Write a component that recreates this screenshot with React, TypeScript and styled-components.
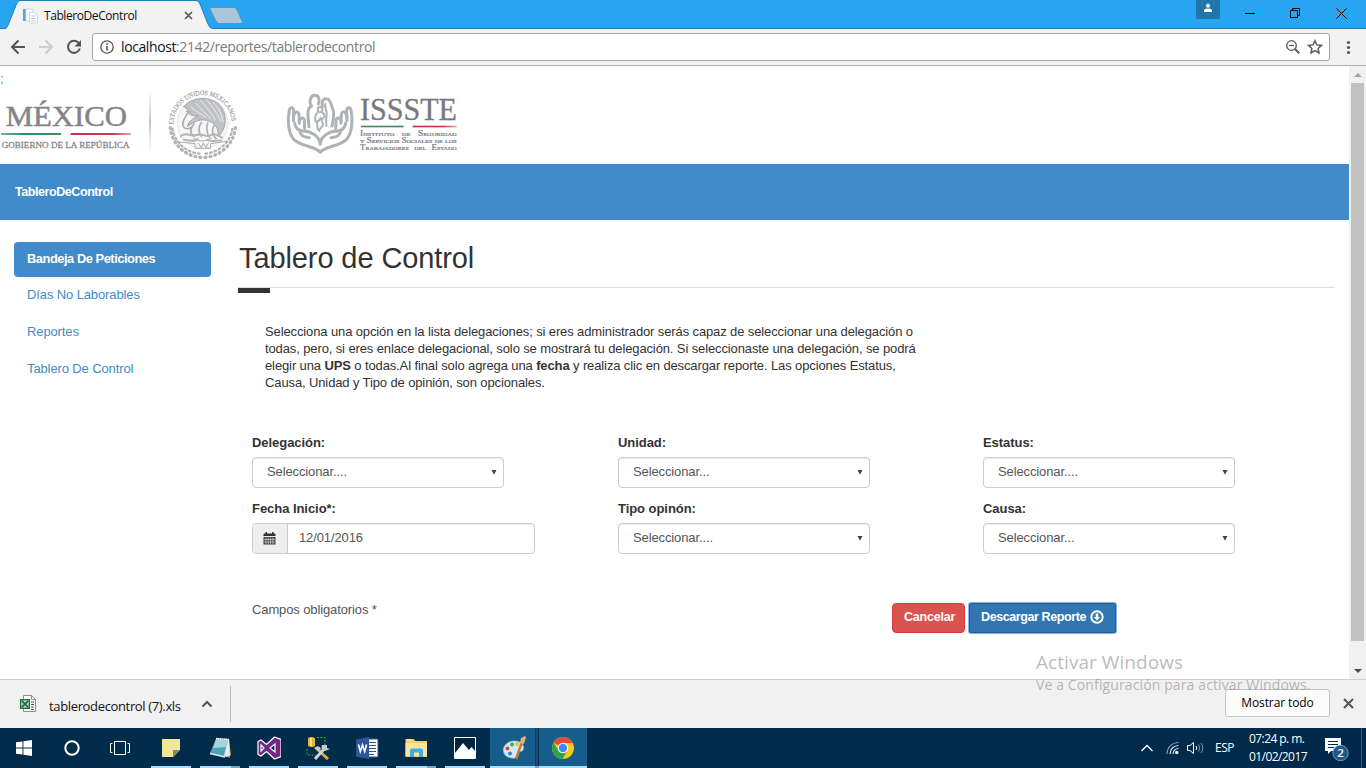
import React from 'react';
import styled, { createGlobalStyle, css } from 'styled-components';

const ui = `'Open Sans', 'Noto Sans', sans-serif`;
const arial = `'Liberation Sans', Arial, sans-serif`;

const GlobalStyle = createGlobalStyle`
  * { box-sizing: border-box; }
  body { margin: 0; background: #fff; overflow: hidden; }
  svg { display: block; flex: none; }
  button { font: inherit; cursor: pointer; }
`;

const Screen = styled.div`
  position: relative;
  width: 1366px;
  height: 768px;
  display: flex;
  flex-direction: column;
  overflow: hidden;
  background: #fff;
`;

/* ---------- browser chrome ---------- */

const TitleBar = styled.header`
  display: flex;
  height: 29px;
  flex: none;
  background: #28a5f1;
  box-shadow: inset 0 -1px 0 #1f7fb9;
`;

const Tab = styled.div`
  position: relative;
  display: flex;
  align-items: center;
  width: 208px;
  height: 29px;
  padding: 2px 15px 0 22px;
`;

const TabShape = styled.svg`
  position: absolute;
  left: 0;
  top: 0;
`;

const TabTitle = styled.span`
  position: relative;
  margin-left: 6px;
  flex: 1;
  font: 12px/16px ${ui};
  letter-spacing: -0.42px;
  color: #111;
  white-space: nowrap;
`;

const Layered = styled.span`
  position: relative;
  display: flex;
`;

const WindowControls = styled.div`
  display: flex;
  margin-left: auto;
  padding-right: 2px;
`;

const Profile = styled.div`
  display: flex;
  justify-content: center;
  width: 24px;
  height: 19px;
  padding-top: 3px;
  margin-right: 6px;
  background: #2176a9;
`;

const WindowButton = styled.div`
  display: flex;
  align-items: center;
  justify-content: center;
  width: 46px;
  height: 26px;
`;

const Toolbar = styled.div`
  display: flex;
  align-items: center;
  height: 37px;
  flex: none;
  padding: 0 11px 0 10px;
  background: #f2f2f2;
  border-bottom: 1px solid #b0b0b0;
`;

const NavIcons = styled.div`
  display: flex;
  gap: 12px;
  width: 82px;
`;

const Omnibox = styled.div`
  display: flex;
  align-items: center;
  width: 1238px;
  height: 28px;
  padding: 0 6px 0 7px;
  background: #fff;
  border: 1px solid #a6a6a6;
  border-radius: 3px;
`;

const OmniboxActions = styled.div`
  display: flex;
  align-items: center;
  gap: 7px;
`;

const Url = styled.span`
  flex: 1;
  margin-left: 7px;
  font: 14px/20px ${ui};
  letter-spacing: -0.4px;
  color: #7b7b7b;
  b { font-weight: 400; color: #111; }
`;

const MenuDots = styled.div`
  margin-left: auto;
`;

/* ---------- page ---------- */

const Viewport = styled.div`
  display: flex;
  height: 613px;
  flex: none;
`;

const Page = styled.div`
  width: 1349px;
  font: 13px/17px ${arial};
  letter-spacing: -0.118px;
  color: #333;
`;

const StrayLine = styled.div`
  height: 22px;
  padding-top: 4px;
  color: #428bca;
`;

const Logos = styled.div`
  display: flex;
  height: 76px;
  letter-spacing: 0;
`;

const NavBar = styled.nav`
  display: flex;
  align-items: center;
  height: 56px;
  padding-left: 15px;
  background: #428bca;
  color: #fff;
  font-weight: 700;
  font-size: 12.5px;
  letter-spacing: -0.43px;
`;

const Columns = styled.div`
  display: flex;
  padding: 22px 14px 0;
`;

const SideMenu = styled.ul`
  width: 197px;
  margin: 0 27px 0 0;
  padding: 0;
  list-style: none;
`;

const SideItem = styled.li<{ $active?: boolean }>`
  height: 35px;
  margin-bottom: 2px;
  padding: 8px 13px;
  border-radius: 4px;
  color: #428bca;
  ${(p) => p.$active && css`
    background: #428bca;
    color: #fff;
    font-weight: 700;
    font-size: 12.8px;
    letter-spacing: -0.43px;
    margin-bottom: 1px;
  `}
`;

const Main = styled.main`
  width: 1097px;
`;

const Heading = styled.h1`
  height: 46px;
  margin: 0;
  padding-left: 1px;
  border-bottom: 1px solid #ddd;
  font: 400 29px/33px ${arial};
  letter-spacing: -0.1px;
`;

const Accent = styled.div`
  width: 32px;
  height: 5px;
  background: #333;
`;

const Intro = styled.p`
  width: 672px;
  margin: 30px 0 43px 27px;
  white-space: nowrap;
`;

const Form = styled.div`
  display: grid;
  grid-template-columns: 366px 365px 252px;
  row-gap: 3px;
  padding-left: 14px;
`;

const Field = styled.label`
  display: block;
  height: 63px;
`;

const Label = styled.span`
  display: block;
  height: 23px;
  font-weight: 700;
  letter-spacing: -0.05px;
`;

const Control = styled.div`
  display: flex;
  align-items: center;
  justify-content: space-between;
  width: 252px;
  height: 31px;
  padding: 0 6px 2px 14px;
  border: 1px solid #ccc;
  border-radius: 4px;
  color: #555;
  box-shadow: inset 0 1px 1px rgba(0, 0, 0, 0.075);
`;

const DateGroup = styled.div`
  display: flex;
  width: 283px;
  height: 31px;
  border: 1px solid #ccc;
  border-radius: 4px;
  overflow: hidden;
  color: #555;
`;

const DateAddon = styled.span`
  display: flex;
  align-items: center;
  justify-content: center;
  width: 35px;
  padding-right: 1px;
  background: #eee;
  border-right: 1px solid #ccc;
`;

const DateValue = styled.span`
  flex: 1;
  padding: 5px 11px;
  box-shadow: inset 0 1px 1px rgba(0, 0, 0, 0.075);
`;

const Actions = styled.div`
  display: flex;
  align-items: flex-start;
  padding: 38px 0 0 14px;
`;

const Required = styled.span`
  width: 640px;
  color: #555;
`;

const Button = styled.button<{ $kind: 'danger' | 'primary' }>`
  display: flex;
  align-items: center;
  justify-content: space-between;
  height: 30px;
  margin-top: 2px;
  padding: 0 11px 2px;
  border-radius: 4px;
  color: #fff;
  font: 700 12.5px/17px ${arial};
  white-space: nowrap;
  ${(p) => p.$kind === 'danger' ? css`
    width: 73px;
    background: #d9534f;
    border: 1px solid #d43f3a;
    margin-right: 4px;
    letter-spacing: -0.2px;
  ` : css`
    width: 147px;
    background: #3276b1;
    border: 1px solid #285e8e;
    border-radius: 2px;
    box-shadow: 0 0 0 1px #85b1f4;
    letter-spacing: -0.4px;
  `}
`;

const ScrollBar = styled.div`
  display: flex;
  flex-direction: column;
  align-items: center;
  width: 17px;
  background: #f1f1f1;
`;

const ScrollArrow = styled.div`
  display: flex;
  align-items: center;
  justify-content: center;
  width: 17px;
  height: 17px;
`;

const Thumb = styled.div`
  width: 13px;
  height: 558px;
  margin-bottom: auto;
  background: #c1c1c1;
`;

/* ---------- download shelf ---------- */

const Shelf = styled.div`
  display: flex;
  align-items: center;
  height: 49px;
  flex: none;
  padding: 0 12px 0 20px;
  background: #f1f1f1;
  border-top: 1px solid #cfcfcf;
`;

const FileIcon = styled.div`
  margin-bottom: 2px;
`;

const FileName = styled.span`
  width: 152px;
  margin-left: 13px;
  padding-top: 4px;
  font: 13px/18px ${ui};
  letter-spacing: -0.35px;
  color: #111;
`;

const Divider = styled.i`
  width: 1px;
  height: 36px;
  margin-left: 17px;
  background: #bdbdbd;
`;

const ShowAll = styled.button`
  width: 105px;
  height: 28px;
  margin: 0 13px 2px auto;
  padding: 0;
  border: 1px solid #c6c6c6;
  border-radius: 3px;
  background: #fcfcfc;
  font: 12px/18px ${ui};
  letter-spacing: -0.1px;
  color: #000;
`;

const ShelfClose = styled.div`
  margin-bottom: 2px;
`;

/* ---------- task bar ---------- */

const TaskBar = styled.footer`
  display: flex;
  height: 40px;
  flex: none;
  background: linear-gradient(90deg, #012b49, #002d4c 60%, #01284a);
`;

const SystemButtons = styled.div`
  display: flex;
  width: 147px;
`;

const SystemButton = styled.div`
  display: flex;
  align-items: center;
  justify-content: center;
  width: 48px;
`;

const Task = styled.div<{ $active?: boolean; $stacked?: boolean }>`
  display: flex;
  flex-direction: column;
  align-items: center;
  justify-content: space-between;
  width: 49px;
  padding-top: 8px;
  svg { margin-right: 2px; }
  ${(p) => p.$active && css`
    background: linear-gradient(90deg, #165d8b ${p.$stacked ? '45px, #0a3b60 45px, #0a3b60 46px, #12507b 46px, #12507b 48px' : '48px'}, #01294a 48px);
  `}
`;

const Underline = styled.i<{ $active?: boolean; $stacked?: boolean }>`
  width: ${(p) => (p.$active ? 49 : 40)}px;
  height: 2px;
  margin-right: ${(p) => (p.$active ? 0 : 1)}px;
  background: ${(p) => p.$stacked
    ? `linear-gradient(90deg, #a9dcfb ${p.$active ? 45 : 31}px, #7ba5c2 ${p.$active ? 45 : 31}px)`
    : 'linear-gradient(90deg, #a9dcfb 48px, #01294a 48px)'};
`;

const Tray = styled.div`
  display: flex;
  align-items: center;
  margin-left: auto;
  color: #fff;
  font: 12px/18px ${ui};
`;

const TrayIcons = styled.div`
  display: flex;
  align-items: center;
  gap: 8px;
  margin-left: 13px;
`;

const Language = styled.span`
  width: 34px;
  margin-left: 11px;
  font-size: 12px;
  letter-spacing: -0.5px;
`;

const Clock = styled.div`
  width: 76px;
  letter-spacing: -0.57px;
  white-space: nowrap;
`;

const DesktopEdge = styled.i`
  width: 5px;
  height: 40px;
  margin-left: 11px;
  border-left: 1px solid #3c5d77;
`;

const Watermark = styled.div`
  position: absolute;
  left: 1036px;
  top: 650px;
  color: rgba(128, 128, 128, 0.55);
  font: 14px/20px ${ui};
  letter-spacing: 0.12px;
  white-space: nowrap;
  pointer-events: none;
`;

const WatermarkTitle = styled.div`
  margin-bottom: 1px;
  font: 19px/24px ${ui};
  letter-spacing: 0.05px;
`;

/* ---------- drawings ---------- */

const MexicoLogo = () => (
  <svg width="250" height="76" viewBox="0 66 750 228">
    <defs>
      <linearGradient id="sep" x1="0" x2="0" y1="0" y2="1">
        <stop offset="0" stopColor="#ccc" stopOpacity="0" />
        <stop offset=".5" stopColor="#c4c4c4" />
        <stop offset="1" stopColor="#ccc" stopOpacity="0" />
      </linearGradient>
      <linearGradient id="green" x1="0" x2="1">
        <stop offset="0" stopColor="#6fb48b" /><stop offset=".4" stopColor="#2f8f5b" /><stop offset="1" stopColor="#3f9060" />
      </linearGradient>
      <linearGradient id="red" x1="0" x2="1">
        <stop offset="0" stopColor="#c0304c" /><stop offset=".7" stopColor="#cf3a56" /><stop offset="1" stopColor="#eba4b0" />
      </linearGradient>
      <path id="ring" d="M520 180 A88 88 0 1 1 695 187" />
    </defs>
    <text x="17" y="180" textLength="364" lengthAdjust="spacingAndGlyphs" fontFamily="Liberation Serif, serif" fontSize="91" fill="#84858b" stroke="#84858b" strokeWidth="1.5">MÉXICO</text>
    <rect x="3" y="201" width="180" height="6" fill="url(#green)" />
    <rect x="212" y="201" width="181" height="6" fill="url(#red)" />
    <text x="5" y="245" textLength="384" lengthAdjust="spacingAndGlyphs" fontFamily="Liberation Serif, serif" fontSize="27" fill="#85868b" stroke="#85868b" strokeWidth=".8">GOBIERNO DE LA REPÚBLICA</text>
    <rect x="447" y="72" width="6" height="190" fill="url(#sep)" />
    <text fontFamily="Liberation Serif, serif" fontSize="20" fill="#97989a" stroke="#97989a" strokeWidth=".4">
      <textPath href="#ring" startOffset="4" textLength="268" lengthAdjust="spacingAndGlyphs">ESTADOS UNIDOS MEXICANOS</textPath>
    </text>
    <g fill="none" stroke="#b3b5b7" strokeLinecap="round">
      <path d="M511 185 A98 98 0 0 0 602 274 M706 185 A98 98 0 0 1 614 274" strokeWidth="10" strokeDasharray="3 12" />
      <path d="M518 189 A88 88 0 0 0 602 263 M697 189 A88 88 0 0 1 614 263" strokeWidth="7" strokeDasharray="5 9" />
      <circle cx="608" cy="172" r="76" fill="#f6f6f6" stroke="#d8d9da" strokeWidth="2" />
      <path d="M552 122 C575 90 642 88 666 126 C682 153 678 190 655 212 C655 187 648 174 628 166 C602 155 585 166 562 182 C566 165 580 157 594 149 C577 151 565 146 559 135 L573 139 C562 130 556 127 552 122Z" fill="#c0c2c4" stroke="#a3a5a7" strokeWidth="3" />
      <path d="M588 112 C605 130 618 145 632 158 M602 104 C620 124 636 143 646 162 M619 101 C639 122 651 143 662 164 M640 109 C658 130 667 146 669 168 M574 124 C593 139 606 147 616 153" stroke="#eeeeef" strokeWidth="3" />
      <path d="M562 143 C554 157 544 168 550 182 C557 192 570 189 577 181 M582 174 C570 190 568 202 582 211 M604 170 C594 183 595 198 604 211 M623 171 C618 188 620 200 628 214 M642 178 C634 193 639 208 648 218" strokeWidth="5" stroke="#adafb1" />
      <path d="M542 211 C560 194 572 215 589 207 C609 199 617 218 633 207 C646 200 655 209 666 215 M551 221 C572 224 585 229 592 219 M622 222 C636 230 651 220 663 224" strokeWidth="6" />
      <path d="M538 228 L585 233 V247 H632 V233 L680 226 M581 216 C596 228 617 228 635 216 M596 232 L604 245 L610 231 L618 245 L625 231" stroke="#a9abad" strokeWidth="3" />
    </g>
  </svg>
);

const IsssteLogo = () => (
  <svg width="230" height="76" viewBox="0 24 690 228">
    <g fill="none" stroke="#b0b3b5" strokeWidth="9" strokeLinecap="round" strokeLinejoin="round">
      {[false, true].map((flip) => (
        <g key={String(flip)} transform={flip ? 'translate(421 0) scale(-1 1)' : undefined}>
          <path d="M211 216 C194 199 151 198 131 178 C114 157 112 120 118 90 C121 80 131 81 131 94 L130 122" />
          <path d="M130 112 C133 92 147 92 147 104 L148 130" />
          <path d="M148 122 C152 110 163 112 163 124 L164 146" />
          <path d="M134 130 C137 148 147 152 158 153 C181 153 207 166 211 192" />
          <path d="M150 156 C153 169 164 172 178 173" />
        </g>
      ))}
      <path d="M185 78 C176 68 180 48 193 46 C207 45 210 58 205 72" />
      <path d="M182 80 C171 86 173 106 177 140" />
      <path d="M217 80 C214 62 221 55 230 56 C243 57 242 74 248 86 C255 100 250 118 246 138" />
      <path d="M226 71 C221 82 233 92 230 104 C228 116 228 124 229 138" strokeWidth="6" />
      <path d="M204 94 C200 82 209 78 216 83 C220 91 215 96 208 97 M201 99 C194 106 195 119 197 124 C203 126 209 121 212 113 M217 99 C226 101 226 112 216 117 C212 124 222 129 218 138 C214 144 205 146 209 153 M199 127 C207 132 198 142 204 149" strokeWidth="6" />
    </g>
    <g fontFamily="Liberation Serif, serif" fill="#77797d">
      <text x="330" y="120" textLength="291" lengthAdjust="spacingAndGlyphs" fontSize="95" stroke="#77797d" strokeWidth="1">ISSSTE</text>
      <g fontSize="22" style={{ fontVariant: 'small-caps' }} stroke="#77797d" strokeWidth=".6">
        <text x="330" y="169" textLength="290" lengthAdjust="spacingAndGlyphs" wordSpacing="12">Instituto de Seguridad</text>
        <text x="330" y="189" textLength="290" lengthAdjust="spacingAndGlyphs">y Servicios Sociales de los</text>
        <text x="330" y="209" textLength="290" lengthAdjust="spacingAndGlyphs" wordSpacing="8">Trabajadores del Estado</text>
      </g>
    </g>
    <rect x="333" y="137" width="128" height="5" fill="#438c63" />
    <rect x="488" y="137" width="132" height="5" fill="url(#red)" />
  </svg>
);

const Cross = ({ size, color, width = 1 }: { size: number; color: string; width?: number }) => (
  <svg width={size} height={size} viewBox={`0 0 ${size} ${size}`}>
    <path d={`M1 1 L${size - 1} ${size - 1} M${size - 1} 1 L1 ${size - 1}`} stroke={color} strokeWidth={width} />
  </svg>
);

const BrowserTop = () => (
  <>
    <TitleBar>
      <Tab>
        <TabShape width="246" height="29" viewBox="0 0 246 29">
          <path d="M0 29 V28.5 H5 C7 28 7.500 26 8.500 24 L16.500 4 Q18 .5 20 .5 H196 Q198.500 .5 200 4 L208 24 Q209.500 28.500 213 28.500 V29Z" fill="#f2f2f2" />
          <path d="M0 28.500 H5 C7 28 7.500 26 8.500 24 L16.500 4 Q18 .5 20 .5 H196 Q198.500 .5 200 4 L208 24 Q209.500 28.500 213 28.500" fill="none" stroke="#1f7fb9" />
          <path d="M211 7.500 H234 Q236 7.500 237 10 L242 21 Q243 23.500 241 23.500 H219 Q217 23.500 216 21 L210 9 Q209.500 7.500 211 7.500Z" fill="#a9c6da" stroke="#5f92b6" />
        </TabShape>
        <Layered>
          <svg width="16" height="16" viewBox="0 0 16 16">
            <path d="M1 1h3v12H1z" fill="#5ba3d6" />
            <path d="M4 1h7v12H4z" fill="#fff" stroke="#d5dae0" />
            <path d="M7.500 4.500h5l3 3v7.500h-8z" fill="#fff" stroke="#d0d5dc" />
            <path d="M9 8h5M9 10.500h5M9 13h5" stroke="#c3cad4" />
          </svg>
        </Layered>
        <TabTitle>TableroDeControl</TabTitle>
        <Layered><Cross size={9} color="#555" width={1.6} /></Layered>
      </Tab>
      <WindowControls>
        <Profile>
          <svg width="10" height="10" viewBox="0 0 10 10" fill="#fff">
            <circle cx="5" cy="2.700" r="2" />
            <path d="M1 9V7.500Q1 5.500 5 5.500T9 7.500V9z" />
          </svg>
        </Profile>
        <WindowButton><svg width="12" height="10"><path d="M2 5.500H12" stroke="#000" /></svg></WindowButton>
        <WindowButton>
          <svg width="10" height="10" fill="none" stroke="#000"><path d="M.5 2.500h7v7h-7zM2.500 2.500v-2h7v7h-2" /></svg>
        </WindowButton>
        <WindowButton><svg width="11" height="11"><path d="M.5 .5l10 10M10.500 .5l-10 10" stroke="#000" /></svg></WindowButton>
      </WindowControls>
    </TitleBar>
    <Toolbar>
      <NavIcons>
        <svg width="16" height="16" fill="none" stroke="#555" strokeWidth="2"><path d="M15 8H2.500M8.500 1.500L2 8l6.500 6.500" /></svg>
        <svg width="16" height="16" fill="none" stroke="#ccc" strokeWidth="2"><path d="M1 8h12.500M7.500 1.500L14 8l-6.500 6.500" /></svg>
        <svg width="16" height="16" viewBox="0 0 16 16">
          <path d="M12.800 4.200A6 6 0 1 0 13.800 9.500" fill="none" stroke="#555" strokeWidth="2" />
          <path d="M15 1v6.500H8.500z" fill="#555" />
        </svg>
      </NavIcons>
      <Omnibox>
        <svg width="14" height="14" viewBox="0 0 14 14" fill="none" stroke="#555">
          <circle cx="7" cy="7" r="6.200" strokeWidth="1.300" />
          <path d="M7 6v4.500M7 3.300v1.700" strokeWidth="1.600" />
        </svg>
        <Url><b>localhost</b>:2142/reportes/tablerodecontrol</Url>
        <OmniboxActions>
          <svg width="14" height="14" viewBox="0 0 14 14" fill="none" stroke="#5a5a5a">
            <circle cx="5.500" cy="5.500" r="4.800" strokeWidth="1.300" />
            <path d="M3 5.500h5" strokeWidth="1.200" /><path d="M9 9l4.300 4.300" strokeWidth="2" />
          </svg>
          <svg width="16" height="16" viewBox="0 0 16 16">
            <path d="M8 1.700l1.900 4.200 4.600.5-3.400 3.100.9 4.500L8 11.700 4 14l.9-4.500L1.500 6.400l4.600-.5z" fill="none" stroke="#5a5a5a" strokeWidth="1.500" />
          </svg>
        </OmniboxActions>
      </Omnibox>
      <MenuDots>
        <svg width="14" height="16" fill="#555"><circle cx="7.500" cy="3.500" r="1.600" /><circle cx="7.500" cy="8.500" r="1.600" /><circle cx="7.500" cy="13.500" r="1.600" /></svg>
      </MenuDots>
    </Toolbar>
  </>
);

const Select = ({ label, text }: { label: string; text: string }) => (
  <Field>
    <Label>{label}</Label>
    <Control>
      {text}
      <svg width="6" height="6"><path d="M.5 1h5L3 5.800z" fill="#444" /></svg>
    </Control>
  </Field>
);

const CalendarIcon = () => (
  <svg width="13" height="13" viewBox="0 0 13 13">
    <path d="M.5 4V2.500Q.5 1.500 1.500 1.500h1V0h1.500v1.500h5V0h1.500v1.500h1q1 0 1 1V4z" fill="#333" />
    <path d="M.5 5h12v7.500H.5z" fill="#3c3c44" />
    <path d="M1 7.500h11M1 10h11M3 5.500V12M5.300 5.500V12M7.600 5.500V12M9.900 5.500V12" stroke="#c8c8d2" strokeWidth=".8" />
  </svg>
);

const tasks: { name: string; active?: boolean; stacked?: boolean; icon: React.ReactNode }[] = [
  { name: 'notes', icon: <><path d="M3 3h18v11l-7 7H3z" fill="#f2e59a" /><path d="M14 21v-7h7z" fill="#7e8b74" /></> },
  { name: 'notepad', stacked: true, icon: <>
    <path d="M21 3l2 16-2 3-2-2z" fill="#b59468" /><path d="M9 2l12 1 1 16-3 2-16-4z" fill="#e6ecec" />
    <path d="M8 3l12 1-4 16-14-3z" fill="#4fa3b8" /><path d="M8 3l12 1-2 7-13 1z" fill="#a3d6de" />
    <path d="M8 2.500l13 1" stroke="#eee" strokeWidth="1.500" strokeDasharray="1 1" /><path d="M2 17.500l15 3.500" stroke="#d6eff2" strokeWidth="1.500" />
  </> },
  { name: 'studio', icon: <path fillRule="evenodd" d="M17.500 1L24 3.500v17L17.500 23 9.500 15.500 4 20l-3-1.500v-13L4 4l5.500 4.500zM4 9v6l3-3zM18 8l-5 4 5 4z" fill="#732783" stroke="#fff" strokeWidth="1.200" /> },
  { name: 'sql', icon: <>
    <path d="M11 1.500h8v8M1 13v6h9" fill="none" stroke="#3dab45" strokeDasharray="2 1.500" />
    <path d="M2 2q3-2 7 0v8q-3 2-7 0z" fill="#eab22e" /><path d="M4 2h2v8H4z" fill="#fbe38c" />
    <path d="M10 12l12 11" stroke="#d8a94e" strokeWidth="3" /><path d="M18 13l-9 10" stroke="#d0d3d5" strokeWidth="3" />
    <path d="M8 12q5-4 7 1l-3 2z M16 9q-2 5 3 6l5-2-3-1v-3z" fill="#c5cacd" />
  </> },
  { name: 'word', icon: <>
    <path d="M12 3h11v18H12z" fill="#fff" stroke="#2b579a" /><path d="M14 6.500h7M14 9.500h7M14 12.500h7M14 15.500h7M14 18.500h5" stroke="#2b579a" />
    <path d="M1 3.500L14 1v22L1 20.500z" fill="#2b579a" /><path d="M3.500 8.500l1.800 7L7.500 9l2.200 6.500 1.800-7" fill="none" stroke="#fff" strokeWidth="1.600" />
  </> },
  { name: 'explorer', stacked: true, icon: <>
    <path d="M1.500 3h8l2 2H23v16H1.500z" fill="#f0cf6c" /><path d="M1.500 7h21.500v13H1.500z" fill="#fbe59c" /><path d="M3 4h5" stroke="#fff7d0" />
    <path d="M6 21v-6.500q0-2 2-2h9q2 0 2 2V21h-4v-4.500h-5V21z" fill="#3aaee8" />
  </> },
  { name: 'photos', icon: <><path d="M1.500 1.500h21v21h-21z" fill="#002440" stroke="#fff" /><path d="M2 17l8-10 6 7 2.500-3L22 15v7H2z" fill="#fff" /></> },
  { name: 'paint', active: true, stacked: true, icon: <>
    <path d="M2 17C-1 10 7 4 14 5c8 1 9 8 6 10-3 1-4 1-4 4 0 5-12 4-14-2z" fill="#d3e9f5" stroke="#8bbbd8" strokeWidth=".7" />
    <circle cx="10" cy="8.500" r="2" fill="#4aa84a" /><circle cx="5.500" cy="12.500" r="2" fill="#dc4734" /><circle cx="15" cy="8" r="2" fill="#eac245" /><circle cx="8" cy="17.500" r="2" fill="#3c7fcd" />
    <path d="M20 6L14 23" stroke="#c77b32" strokeWidth="2.500" /><path d="M18 7l1-5 4-2 1 1-2 7z" fill="#e4b277" />
  </> },
  { name: 'chrome', active: true, icon: <>
    <circle cx="12" cy="12" r="11" fill="#fbc916" />
    <path d="M12 12L2.470 6.500A11 11 0 0 1 21.530 6.500L21.530 7H12z" fill="#e5493a" />
    <path d="M2.470 6.500A11 11 0 0 0 11.500 23L16.500 14.500 12 12 7.500 14.500z" fill="#2ba24c" />
    <circle cx="12" cy="12" r="5.300" fill="#fff" /><circle cx="12" cy="12" r="4.200" fill="#4587f0" />
  </> },
];

export default function App() {
  return (
    <Screen>
      <GlobalStyle />
      <BrowserTop />
      <Viewport>
        <Page>
          <StrayLine>;</StrayLine>
          <Logos><MexicoLogo /><IsssteLogo /></Logos>
          <NavBar>TableroDeControl</NavBar>
          <Columns>
            <SideMenu>
              <SideItem $active>Bandeja De Peticiones</SideItem>
              <SideItem>Días No Laborables</SideItem>
              <SideItem>Reportes</SideItem>
              <SideItem>Tablero De Control</SideItem>
            </SideMenu>
            <Main>
              <Heading>Tablero de Control</Heading>
              <Accent />
              <Intro>
                Selecciona una opción en la lista delegaciones; si eres administrador serás capaz de seleccionar una delegación o<br />
                todas, pero, si eres enlace delegacional, solo se mostrará tu delegación. Si seleccionaste una delegación, se podrá<br />
                elegir una <b>UPS</b> o todas.Al final solo agrega una <b>fecha</b> y realiza clic en descargar reporte. Las opciones Estatus,<br />
                Causa, Unidad y Tipo de opinión, son opcionales.
              </Intro>
              <Form>
                <Select label="Delegación:" text="Seleccionar...." />
                <Select label="Unidad:" text="Seleccionar..." />
                <Select label="Estatus:" text="Seleccionar...." />
                <Field>
                  <Label>Fecha Inicio*:</Label>
                  <DateGroup>
                    <DateAddon><CalendarIcon /></DateAddon>
                    <DateValue>12/01/2016</DateValue>
                  </DateGroup>
                </Field>
                <Select label="Tipo opinón:" text="Seleccionar...." />
                <Select label="Causa:" text="Seleccionar..." />
              </Form>
              <Actions>
                <Required>Campos obligatorios *</Required>
                <Button $kind="danger">Cancelar</Button>
                <Button $kind="primary">
                  Descargar Reporte
                  <svg width="14" height="14" viewBox="0 0 14 14">
                    <circle cx="7" cy="7" r="5.700" fill="none" stroke="#fff" strokeWidth="2" />
                    <path d="M5.700 3.500h2.600V7h2L7 10.600 3.700 7h2z" fill="#fff" />
                  </svg>
                </Button>
              </Actions>
            </Main>
          </Columns>
        </Page>
        <ScrollBar>
          <ScrollArrow><svg width="8" height="4"><path d="M0 4L4 0l4 4z" fill="#a3a3a3" /></svg></ScrollArrow>
          <Thumb />
          <ScrollArrow><svg width="8" height="4"><path d="M0 0h8L4 4z" fill="#505050" /></svg></ScrollArrow>
        </ScrollBar>
      </Viewport>
      <Shelf>
        <FileIcon>
          <svg width="16" height="17" viewBox="0 0 16 17">
            <path d="M3.500 .5h8l4 4v12h-12z" fill="#fff" stroke="#8d8d8d" />
            <path d="M11.500 .5v4h4" fill="none" stroke="#8d8d8d" />
            <path d="M11 7h3M11 9.500h3M11 12h3M11 14.500h3" stroke="#217346" strokeWidth="1.200" />
            <path d="M0 4h10v10H0z" fill="#217346" /><path d="M1.500 5.500h7v7h-7z" fill="#e6f2eb" />
            <path d="M2 6l6 6M8 6l-6 6" stroke="#217346" strokeWidth="2" />
          </svg>
        </FileIcon>
        <FileName>tablerodecontrol (7).xls</FileName>
        <svg width="12" height="8" fill="none" stroke="#555" strokeWidth="2"><path d="M1.500 6.500L6 2l4.500 4.500" /></svg>
        <Divider />
        <ShowAll>Mostrar todo</ShowAll>
        <ShelfClose><Cross size={11} color="#555" width={2} /></ShelfClose>
      </Shelf>
      <TaskBar>
        <SystemButtons>
          <SystemButton>
            <svg width="16" height="16" viewBox="0 0 16 16" fill="#fff"><path d="M0 2.300L6.500 1.400v6.100H0zM7.400 1.200L16 0v7.500H7.400zM0 8.500h6.500v6.100L0 13.700zM7.400 8.500H16V16l-8.600-1.200z" /></svg>
          </SystemButton>
          <SystemButton><svg width="16" height="16"><circle cx="8" cy="8" r="6.700" fill="none" stroke="#fff" strokeWidth="2" /></svg></SystemButton>
          <SystemButton><svg width="20" height="14" fill="none" stroke="#fff"><path d="M4.500 .5h11v13h-11zM2.500 2.500h-2v9h2M17.500 2.500h2v9h-2" /></svg></SystemButton>
        </SystemButtons>
        {tasks.map((t) => (
          <Task key={t.name} $active={t.active} $stacked={t.stacked}>
            <svg width="24" height="24" viewBox="0 0 24 24">{t.icon}</svg>
            <Underline $active={t.active} $stacked={t.stacked} />
          </Task>
        ))}
        <Tray>
          <svg width="12" height="8" fill="none" stroke="#fff" strokeWidth="1.300"><path d="M.5 7L6 1.500 11.500 7" /></svg>
          <TrayIcons>
            <svg width="13" height="14" viewBox="0 0 13 14" fill="none" stroke="#dfe6ec" strokeWidth="1.200">
              <path d="M1 13A11.500 11.500 0 0 1 12.500 1.500" opacity=".6" /><path d="M4 13A8.500 8.500 0 0 1 12.500 4.500M7 13A5.500 5.500 0 0 1 12.500 7.500" /><circle cx="10.800" cy="11.500" r="1.200" fill="#fff" />
            </svg>
            <svg width="17" height="14" viewBox="0 0 17 14" fill="none" stroke="#fff">
              <path d="M.5 4.500h2.500L6.500 1.500v11L3 9.500H.5z" /><path d="M9 5q1.500 2 0 4" /><path d="M11.500 3.500q2.500 3.500 0 7M14 2q3.500 5 0 10" opacity=".5" />
            </svg>
          </TrayIcons>
          <Language>ESP</Language>
          <Clock>07:24 p. m.<br />01/02/2017</Clock>
          <svg width="25" height="26" viewBox="0 0 25 26">
            <path d="M0 3h16v13H6l-3 3v-3H0z" fill="#fff" /><path d="M3 6.500h10M3 9.500h10M3 12.500h6" stroke="#012b49" />
            <circle cx="15.500" cy="18" r="7.700" fill="#1b588c" stroke="#8ba8c0" strokeWidth=".8" />
            <text x="15.500" y="22" textAnchor="middle" fontFamily="Open Sans, sans-serif" fontSize="11.500" fontWeight="600" fill="#fff">2</text>
          </svg>
          <DesktopEdge />
        </Tray>
      </TaskBar>
      <Watermark>
        <WatermarkTitle>Activar Windows</WatermarkTitle>
        Ve a Configuración para activar Windows.
      </Watermark>
    </Screen>
  );
}
